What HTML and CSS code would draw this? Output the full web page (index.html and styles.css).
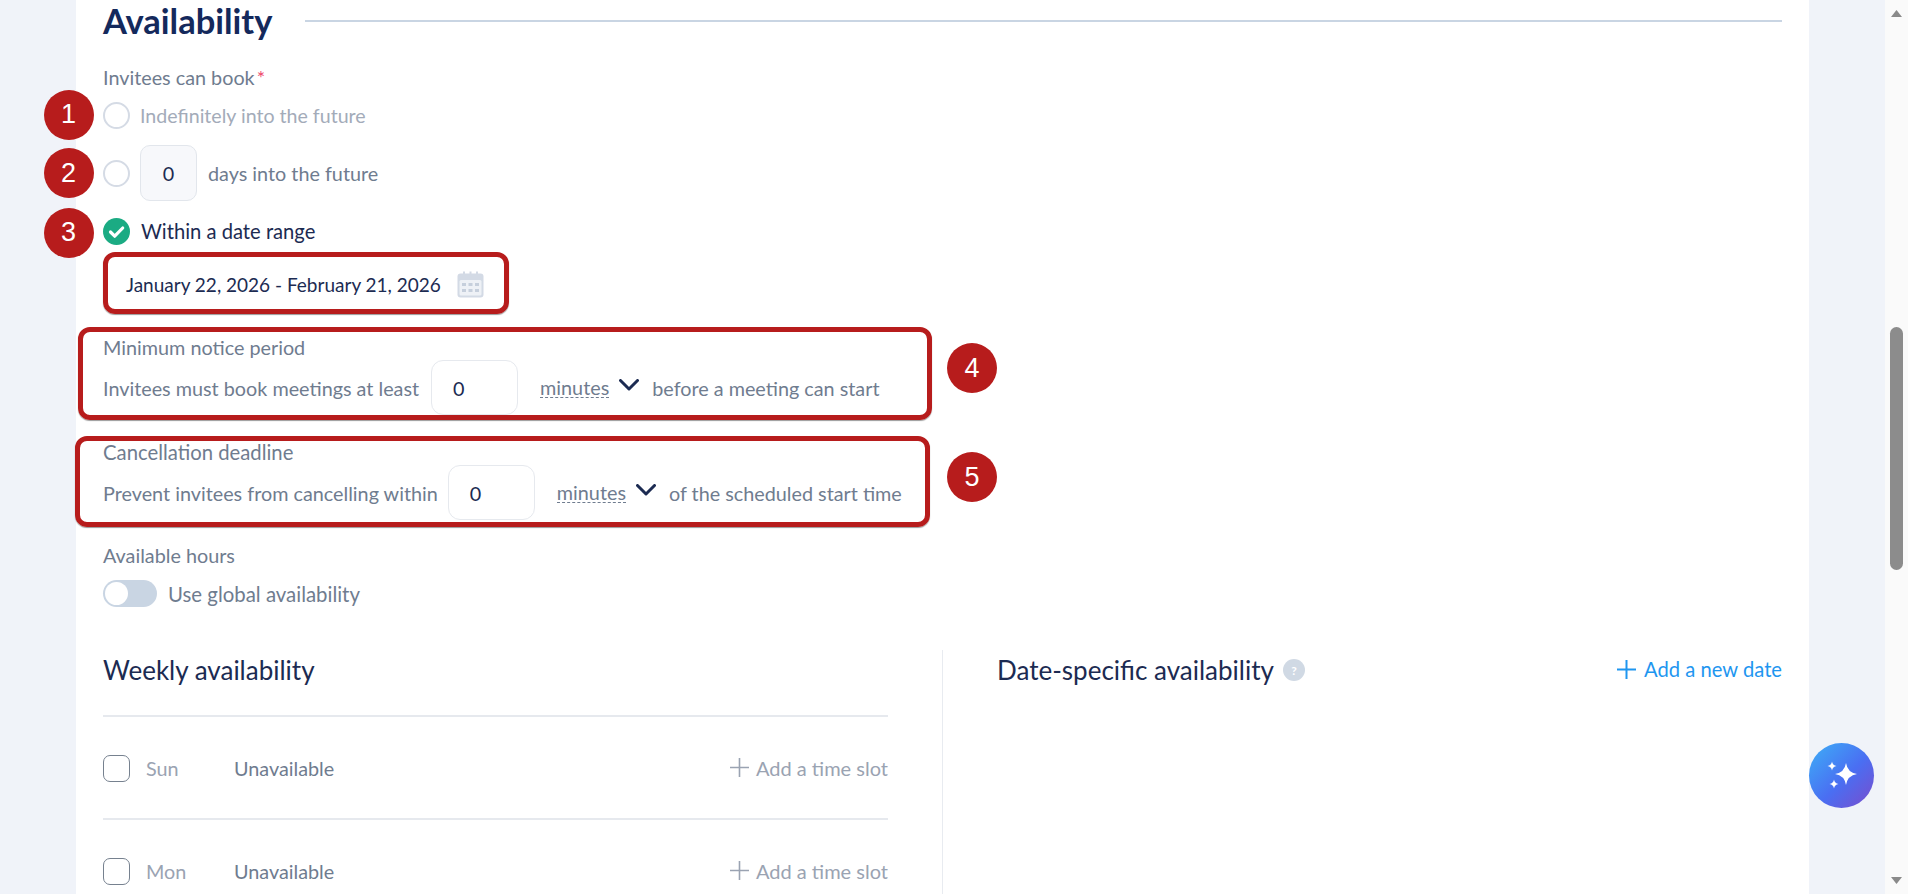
FILE: index.html
```html
<!DOCTYPE html>
<html lang="en">
<head>
    <meta charset="UTF-8">
    <meta name="viewport" content="width=device-width, initial-scale=1.0">
    <title>Availability</title>
    <link rel="stylesheet" href="styles.css">
</head>
<body>
    <div class="page">
        <div class="card">
            <div class="section-title">
                <h2>Availability</h2>
                <div class="title-line"></div>
            </div>

            <div class="label book-label">Invitees can book<span class="required">*</span></div>

            <div class="option option-first">
                <span class="marker marker-left">1</span>
                <span class="radio"></span>
                <span class="muted">Indefinitely into the future</span>
            </div>
            <div class="option option-days">
                <span class="marker marker-left">2</span>
                <span class="radio"></span>
                <span class="days-input">0</span>
                <span class="label">days into the future</span>
            </div>
            <div class="option option-range">
                <span class="marker marker-left">3</span>
                <svg class="radio-on" viewBox="0 0 27 27">
                    <circle cx="13.5" cy="13.5" r="13.5" fill="#1bab83"/>
                    <path d="M7.5 14l4.2 4.2 8-8.2" fill="none" stroke="#fff" stroke-width="3.2" stroke-linecap="round" stroke-linejoin="round"/>
                </svg>
                <span class="dark range-text">Within a date range</span>
            </div>

            <div class="date-box">
                <span class="dark date-text">January 22, 2026 - February 21, 2026</span>
                <svg class="calendar-icon" viewBox="0 0 27 27">
                    <path d="M6 0.5h2v3h-2zM12.5 0.5h2v3h-2zM19 0.5h2v3h-2z" fill="#d3dae5"/>
                    <rect x="0.5" y="2.5" width="26" height="24" rx="3" fill="#d3dae5"/>
                    <rect x="2.5" y="9" width="22" height="15.5" rx="1.5" fill="#eef1f6"/>
                    <path d="M5 12h4v3h-4zM11.5 12h4v3h-4zM18 12h4v3h-4zM5 18h4v3h-4zM11.5 18h4v3h-4zM18 18h4v3h-4z" fill="#c6cfdc"/>
                </svg>
            </div>

            <div class="red-box notice-box">
                <span class="marker marker-right">4</span>
                <div class="label">Minimum notice period</div>
                <div class="field-row">
                    <span class="label">Invitees must book meetings at least</span>
                    <span class="num-input">0</span>
                    <span class="unit">minutes</span>
                    <svg class="chevron" viewBox="0 0 20 12"><path d="M1.5 1.5l8.5 8.5 8.5-8.5" fill="none" stroke="#1c2b52" stroke-width="3" stroke-linecap="round" stroke-linejoin="round"/></svg>
                    <span class="label">before a meeting can start</span>
                </div>
            </div>

            <div class="red-box cancel-box">
                <span class="marker marker-right">5</span>
                <div class="label cancel-label">Cancellation deadline</div>
                <div class="field-row">
                    <span class="label">Prevent invitees from cancelling within</span>
                    <span class="num-input">0</span>
                    <span class="unit">minutes</span>
                    <svg class="chevron" viewBox="0 0 20 12"><path d="M1.5 1.5l8.5 8.5 8.5-8.5" fill="none" stroke="#1c2b52" stroke-width="3" stroke-linecap="round" stroke-linejoin="round"/></svg>
                    <span class="label">of the scheduled start time</span>
                </div>
            </div>

            <div class="label hours-label">Available hours</div>
            <div class="toggle-row">
                <span class="toggle"><span class="knob"></span></span>
                <span class="label global-text">Use global availability</span>
            </div>

            <div class="columns">
                <div class="col-left">
                    <div class="col-header">
                        <h3>Weekly availability</h3>
                    </div>
                    <div class="day-row">
                        <span class="checkbox"></span>
                        <span class="day-name">Sun</span>
                        <span class="day-status">Unavailable</span>
                        <span class="add-slot">
                            <svg class="plus" viewBox="0 0 19 19"><path d="M9.5 0v19M0 9.5h19" stroke="#9aa3b2" stroke-width="1.6"/></svg>
                            Add a time slot
                        </span>
                    </div>
                    <div class="day-row">
                        <span class="checkbox"></span>
                        <span class="day-name">Mon</span>
                        <span class="day-status">Unavailable</span>
                        <span class="add-slot">
                            <svg class="plus" viewBox="0 0 19 19"><path d="M9.5 0v19M0 9.5h19" stroke="#9aa3b2" stroke-width="1.6"/></svg>
                            Add a time slot
                        </span>
                    </div>
                </div>
                <div class="col-right">
                    <div class="col-header">
                        <h3>Date-specific availability</h3>
                        <span class="help">?</span>
                        <span class="add-date">
                            <svg class="plus" viewBox="0 0 19 19"><path d="M9.5 0v19M0 9.5h19" stroke="#1e96f0" stroke-width="2"/></svg>
                            Add a new date
                        </span>
                    </div>
                </div>
            </div>
        </div>

        <div class="gutter"></div>

        <div class="scrollbar">
            <svg class="arrow" viewBox="0 0 11 7"><path d="M5.5 0l5.5 7h-11z" fill="#8a8a8a"/></svg>
            <div class="thumb"></div>
            <svg class="arrow arrow-down" viewBox="0 0 11 7"><path d="M0 0h11l-5.5 7z" fill="#8a8a8a"/></svg>
        </div>
    </div>

    <div class="fab">
        <svg viewBox="0 0 65 65" width="65" height="65">
            <path d="M37 20Q38.5 29.5 48 31 38.5 32.5 37 42 35.5 32.5 26 31 35.5 29.5 37 20Z" fill="#fff"/>
            <path d="M23 18.5Q23.6 22.4 27.5 23 23.6 23.6 23 27.5 22.4 23.6 18.5 23 22.4 22.4 23 18.5Z" fill="#fff"/>
            <path d="M25 36.5Q25.6 40.4 29.5 41 25.6 41.6 25 45.5 24.4 41.6 20.5 41 24.4 40.4 25 36.5Z" fill="#fff"/>
        </svg>
    </div>
</body>
</html>
```

FILE: styles.css
```css
body {
    font-family: Lato, "Noto Sans", sans-serif;
    font-size: 19.8px;
    margin: 0;
    padding: 0;
    background-color: #f0f3f9;
    color: #6f7c8f;
    overflow: hidden;
}
.page {
    display: flex;
    height: 894px;
    overflow: hidden;
    padding-left: 76px;
}
.card {
    width: 1733px;
    box-sizing: border-box;
    padding: 0 27px;
    background-color: #fff;
}
.section-title {
    display: flex;
    align-items: center;
    height: 42px;
}
.section-title h2 {
    margin: 0;
    font-size: 34.5px;
    font-weight: 700;
    line-height: 42px;
    color: #14295c;
}
.title-line {
    flex: 1;
    height: 2px;
    margin-left: 33px;
    background-color: #c9d5e3;
}
.label {
    line-height: 24px;
    color: #6f7c8f;
}
.muted {
    font-size: 19.6px;
    color: #a3abb9;
}
.dark {
    color: #1c2b52;
}
.range-text {
    font-size: 20.2px;
    margin-top: -1px;
}
.date-text {
    font-size: 19px;
}
.cancel-label {
    font-size: 20.3px;
    margin-top: -1px;
}
.global-text {
    font-size: 20.4px;
}
.required {
    color: #ee4b6d;
    margin-left: 2px;
}
.book-label {
    margin-top: 23px;
}
.option {
    position: relative;
    display: flex;
    align-items: center;
    gap: 11px;
}
.option-first {
    margin-top: 13px;
    height: 27px;
}
.option-days {
    margin-top: 16px;
    height: 56px;
}
.option-range {
    margin-top: 17px;
    height: 27px;
}
.radio {
    width: 27px;
    height: 27px;
    box-sizing: border-box;
    border: 2px solid #d5dbe5;
    border-radius: 50%;
    margin-right: -1px;
}
.radio-on {
    width: 27px;
    height: 27px;
}
.days-input {
    width: 57px;
    height: 56px;
    box-sizing: border-box;
    display: flex;
    align-items: center;
    justify-content: center;
    background-color: #f7f8fb;
    border: 1px solid #e2e6ec;
    border-radius: 10px;
    color: #1c2b52;
}
.marker {
    position: absolute;
    width: 50px;
    height: 50px;
    display: flex;
    align-items: center;
    justify-content: center;
    border-radius: 50%;
    background-color: #b71c1c;
    color: #fff;
    font-family: "Liberation Sans", Arial, sans-serif;
    font-size: 27px;
}
.marker-left {
    left: -59.5px;
    top: 50%;
}
.option-first .marker-left {
    margin-top: -26px;
}
.option-days .marker-left {
    margin-top: -25px;
}
.option-range .marker-left {
    margin-top: -24px;
}
.marker-right {
    top: 11px;
}
.notice-box .marker-right {
    left: calc(100% + 20px);
}
.cancel-box .marker-right {
    left: calc(100% + 22px);
}
.date-box {
    width: 406px;
    height: 62px;
    box-sizing: border-box;
    display: flex;
    align-items: center;
    justify-content: space-between;
    margin-top: 7px;
    padding: 2px 20px 0 18px;
    border: 5px solid #b71c1c;
    border-radius: 12px;
    box-shadow: 0 1px 1px rgba(0, 0, 0, 0.4);
}
.calendar-icon {
    width: 27px;
    height: 27px;
}
.red-box {
    position: relative;
    box-sizing: border-box;
    border: 5px solid #b71c1c;
    border-radius: 12px;
    box-shadow: 0 1px 1px rgba(0, 0, 0, 0.4);
}
.notice-box {
    width: 854px;
    height: 93px;
    margin: 13px 0 0 -25px;
    padding: 3px 0 0 20px;
}
.cancel-box {
    width: 855px;
    height: 91px;
    margin: 16px 0 0 -28px;
    padding: 0 0 0 23px;
}
.notice-box .field-row {
    margin-top: 1px;
}
.cancel-label + .field-row {
    margin-top: 1px;
}
.field-row {
    display: flex;
    align-items: center;
    height: 55px;
}
.num-input {
    width: 87px;
    height: 55px;
    box-sizing: border-box;
    display: flex;
    align-items: center;
    padding-left: 21px;
    margin: 0 22px 0 12px;
    border: 1px solid #e6e9ee;
    border-radius: 12px;
    background-color: #fff;
    color: #1c2b52;
}
.cancel-box .num-input {
    margin-left: 10px;
}
.unit {
    border-bottom: 1px dashed #6f7c8f;
    line-height: 19px;
    color: #6f7c8f;
}
.chevron {
    width: 20px;
    height: 12px;
    margin: 0 13px 5px 10px;
}
.hours-label {
    margin-top: 16px;
}
.toggle-row {
    display: flex;
    align-items: center;
    gap: 11px;
    height: 27px;
    margin-top: 13px;
}
.toggle {
    width: 54px;
    height: 27px;
    display: block;
    border-radius: 14px;
    background-color: #c9d5e3;
}
.knob {
    width: 23px;
    height: 23px;
    display: block;
    margin: 2px;
    border-radius: 50%;
    background-color: #fff;
}
.columns {
    display: flex;
    margin-top: 43px;
}
.col-left {
    width: 785px;
    padding-right: 54px;
    border-right: 1px solid #e8ebf0;
}
.col-right {
    flex: 1;
    padding-left: 54px;
}
.col-header {
    display: flex;
    align-items: center;
    height: 40px;
    margin-bottom: 25px;
}
.col-header h3 {
    margin: 0;
    font-size: 26px;
    font-weight: 400;
    color: #1c2b52;
}
.help {
    width: 22px;
    height: 22px;
    display: flex;
    align-items: center;
    justify-content: center;
    margin-left: 9px;
    border-radius: 50%;
    background-color: #d0d9e4;
    color: #fff;
    font-size: 12px;
    font-weight: 700;
}
.add-date {
    display: flex;
    align-items: center;
    gap: 8px;
    margin: 0 0 2px auto;
    font-size: 20.2px;
    color: #1e96f0;
}
.plus {
    width: 19px;
    height: 19px;
}
.day-row {
    display: flex;
    align-items: center;
    height: 103px;
    box-sizing: border-box;
    padding-top: 2px;
    border-top: 2px solid #e6e9ee;
}
.checkbox {
    width: 27px;
    height: 27px;
    box-sizing: border-box;
    border: 1.5px solid #76818f;
    border-radius: 7px;
}
.day-name {
    width: 88px;
    margin: 0 0 2px 16px;
    color: #9aa3b2;
}
.day-status {
    margin-bottom: 2px;
}
.add-slot {
    display: flex;
    align-items: center;
    gap: 7px;
    margin: 0 0 2px auto;
    font-size: 20px;
    color: #9aa3b2;
}
.gutter {
    width: 76px;
}
.scrollbar {
    width: 23px;
    height: 894px;
    box-sizing: border-box;
    display: flex;
    flex-direction: column;
    align-items: center;
    padding-top: 10px;
    background-color: #fafafa;
}
.arrow {
    width: 11px;
    height: 7px;
    flex-shrink: 0;
}
.thumb {
    width: 13px;
    height: 243px;
    margin-top: 310px;
    border-radius: 7px;
    background-color: #8c8c8c;
}
.arrow-down {
    margin-top: 307px;
}
.fab {
    position: absolute;
    left: 1809px;
    top: 743px;
    width: 65px;
    height: 65px;
    border-radius: 50%;
    background: linear-gradient(135deg, #3fa4f6 10%, #4a6ef2 55%, #7a4ccc 100%);
}
```
